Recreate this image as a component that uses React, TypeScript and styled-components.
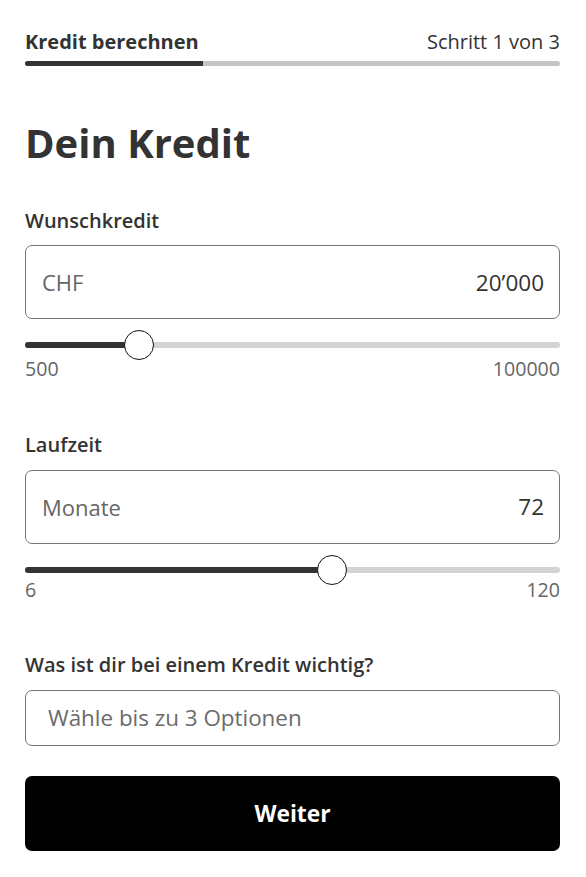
import styled, { createGlobalStyle } from 'styled-components';

const GlobalStyle = createGlobalStyle`
  * {
    box-sizing: border-box;
  }

  body {
    margin: 0;
    background: #ffffff;
    font-family: 'Open Sans', 'Noto Sans', sans-serif;
    color: #333333;
  }
`;

const Page = styled.main`
  padding: 29px 26px 26px 25px;
`;

const StepHeader = styled.div`
  display: flex;
  justify-content: space-between;
  align-items: center;
  height: 24px;
  font-size: 20px;
`;

const StepTitle = styled.span`
  font-weight: 700;
`;

const StepCount = styled.span`
  font-weight: 400;
`;

const Progress = styled.div`
  height: 5px;
  margin-top: 8px;
  border-radius: 3px;
  background: #c4c4c4;
  overflow: hidden;
`;

const ProgressFill = styled.div`
  height: 100%;
  background: #333333;
`;

const Title = styled.h1`
  margin: 53px 0 0;
  font-size: 40px;
  line-height: 48px;
  font-weight: 700;
`;

const Field = styled.section<{ $gap: number }>`
  margin-top: ${(p) => p.$gap}px;
`;

const Label = styled.label`
  display: block;
  font-size: 20px;
  line-height: 27px;
  font-weight: 600;
  margin-bottom: 11.5px;
`;

const InputBox = styled.div<{ $height: number }>`
  display: flex;
  align-items: center;
  justify-content: space-between;
  height: ${(p) => p.$height}px;
  padding: 0 15px 0 16px;
  border: 1px solid #767676;
  border-radius: 7px;
  font-size: 22px;
`;

const Unit = styled.span`
  color: #666666;
`;

const Value = styled.span`
  color: #333333;
  font-size: 22.5px;
`;

const Placeholder = styled.span`
  color: #6b6b6b;
  font-size: 22.4px;
  padding-left: 6px;
`;

const Track = styled.div`
  position: relative;
  height: 6px;
  margin-top: 23px;
  border-radius: 3px;
  background: #d3d3d3;
`;

const TrackFill = styled.div`
  height: 100%;
  border-radius: 3px;
  background: #333333;
`;

const Thumb = styled.div`
  position: absolute;
  top: 50%;
  width: 30px;
  height: 30px;
  margin-top: -15px;
  border: 1px solid #111111;
  border-radius: 50%;
  background: #ffffff;
`;

const Range = styled.div<{ $gap: number }>`
  display: flex;
  justify-content: space-between;
  margin-top: ${(p) => p.$gap}px;
  font-size: 19.6px;
  line-height: 27px;
  color: #666666;
`;

const Button = styled.button`
  display: block;
  width: 100%;
  height: 75px;
  margin-top: 30px;
  border: none;
  border-radius: 7px;
  background: #000000;
  color: #ffffff;
  font-family: inherit;
  font-size: 22.8px;
  font-weight: 700;
`;

type SliderProps = { min: number; max: number; value: number; labelGap: number };

const Slider = ({ min, max, value, labelGap }: SliderProps) => {
  const ratio = (value - min) / (max - min);
  return (
    <>
      <Track>
        <TrackFill style={{ width: `calc(${ratio} * (100% - 30px) + 15px)` }} />
        <Thumb style={{ left: `calc(${ratio} * (100% - 30px))` }} />
      </Track>
      <Range $gap={labelGap}>
        <span>{min}</span>
        <span>{max}</span>
      </Range>
    </>
  );
};

const App = () => {
  return (
    <>
      <GlobalStyle />
      <Page>
        <StepHeader>
          <StepTitle>Kredit berechnen</StepTitle>
          <StepCount>Schritt 1 von 3</StepCount>
        </StepHeader>
        <Progress>
          <ProgressFill style={{ width: `${100 / 3}%` }} />
        </Progress>

        <Title>Dein Kredit</Title>

        <Field $gap={39.5}>
          <Label>Wunschkredit</Label>
          <InputBox $height={74}>
            <Unit>CHF</Unit>
            <Value>20’000</Value>
          </InputBox>
          <Slider min={500} max={100000} value={20000} labelGap={7} />
        </Field>

        <Field $gap={49}>
          <Label>Laufzeit</Label>
          <InputBox $height={74}>
            <Unit>Monate</Unit>
            <Value>72</Value>
          </InputBox>
          <Slider min={6} max={120} value={72} labelGap={3} />
        </Field>

        <Field $gap={48.5}>
          <Label>Was ist dir bei einem Kredit wichtig?</Label>
          <InputBox $height={56}>
            <Placeholder>Wähle bis zu 3 Optionen</Placeholder>
          </InputBox>
        </Field>

        <Button type="button">Weiter</Button>
      </Page>
    </>
  );
};

export default App;
